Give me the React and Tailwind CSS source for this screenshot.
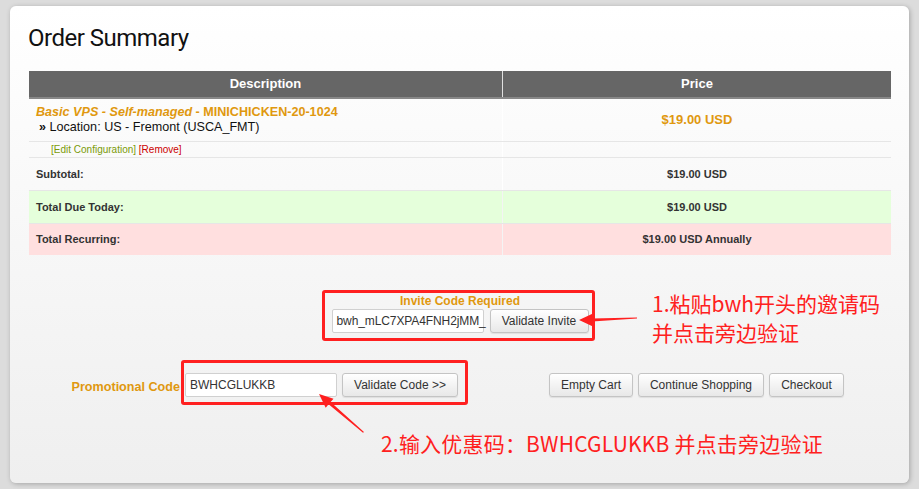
import React from "react";

const btn =
  "h-[24px] rounded-[3px] border border-[#c4c4c4] bg-gradient-to-b from-white to-[#e8e8e8] text-[12px] text-[#333] shadow-[0_1px_1px_rgba(0,0,0,0.08)] flex items-center justify-center";
const input =
  "h-[24px] w-[152px] rounded-[2px] border border-[#d0d0d0] bg-white text-[12px] text-[#333] pl-[4px] flex items-center whitespace-nowrap";

export default function App() {
  return (
    <div
      className="relative w-[919px] h-[489px] bg-[#dcdcdc] pt-[6px] pl-[10px] overflow-hidden"
      style={{ fontFamily: '"Liberation Sans", Arial, sans-serif' }}
    >
      <div className="w-[899px] h-[477px] rounded-[6px] bg-gradient-to-b from-white to-[#efefef] shadow-[1px_1px_5px_rgba(0,0,0,0.25)] pt-[17px] pl-[18px] pr-[19px]">
        <h1
          className="text-[24px] leading-[31px] text-[#111] tracking-[-0.5px]"
          style={{ fontFamily: 'Roboto, "Noto Sans", sans-serif' }}
        >
          Order Summary
        </h1>

        <div className="mt-[17px] ml-[1px] w-[862px]">
          {/* header */}
          <div className="flex h-[28px] bg-[#666] border-b-2 border-[#888] text-white font-bold text-[13px]">
            <div className="w-[473px] flex items-center justify-center">Description</div>
            <div className="flex-1 border-l border-[#e0e0e0] flex items-center justify-center">Price</div>
          </div>
          {/* product */}
          <div className="flex h-[42px]">
            <div className="w-[473px] pl-[7px] pt-[6px] text-[12.6px] leading-[15px]">
              <div className="text-[#e0980f] font-bold">
                <span className="italic">Basic VPS - Self-managed</span> - MINICHICKEN-20-1024
              </div>
              <div className="text-[#111] pl-[3px]">
                <b>»</b> Location: US - Fremont (USCA_FMT)
              </div>
            </div>
            <div className="flex-1 border-l border-white flex items-center justify-center text-[13px] font-bold text-[#e0980f]">
              $19.00 USD
            </div>
          </div>
          {/* edit row */}
          <div className="flex h-[16px] border-t border-[#e6e6e6]">
            <div className="w-[473px] pl-[22px] text-[10px] leading-[14px] pt-[1px]">
              <span className="text-[#7a9a08]">[Edit Configuration]</span>{" "}
              <span className="text-[#cc0000]">[Remove]</span>
            </div>
            <div className="flex-1 border-l border-white"></div>
          </div>
          {/* subtotal */}
          <div className="flex h-[33px] border-t border-[#e6e6e6] text-[11px] font-bold text-[#333]">
            <div className="w-[473px] pl-[7px] flex items-center">Subtotal:</div>
            <div className="flex-1 border-l border-white flex items-center justify-center">$19.00 USD</div>
          </div>
          <div className="flex h-[33px] border-t border-[#e6e6e6] bg-[#e5ffdb] text-[11px] font-bold text-[#333]">
            <div className="w-[473px] pl-[7px] flex items-center">Total Due Today:</div>
            <div className="flex-1 border-l border-[#f4f4f4] flex items-center justify-center">$19.00 USD</div>
          </div>
          <div className="flex h-[32px] border-t border-[#e6e6e6] bg-[#ffdfdf] text-[11px] font-bold text-[#333]">
            <div className="w-[473px] pl-[7px] flex items-center">Total Recurring:</div>
            <div className="flex-1 border-l border-[#f4f4f4] flex items-center justify-center">$19.00 USD Annually</div>
          </div>
        </div>

        {/* invite */}
        <div className="mt-[39px] ml-[1px] w-[862px] flex flex-col items-center">
          <div className="text-[12px] leading-[15px] font-bold text-[#e0980f]">Invite Code Required</div>
          <div className="flex gap-[6px]">
            <div className={input + " text-[11.5px] tracking-[-0.1px]"}>bwh_mLC7XPA4FNH2jMM_</div>
            <div className={btn + " w-[99px]"}>Validate Invite</div>
          </div>
        </div>

        {/* promo + buttons */}
        <div className="mt-[40px] ml-[1px] flex items-center">
          <div className="w-[151px] text-right text-[12.6px] font-bold text-[#e0980f] pt-[5px]">Promotional Code</div>
          <div className={input + " ml-[5px]"}>BWHCGLUKKB</div>
          <div className={btn + " w-[116px] ml-[5px]"}>Validate Code &gt;&gt;</div>
          <div className={btn + " w-[84px] ml-[91px]"}>Empty Cart</div>
          <div className={btn + " w-[126px] ml-[5px]"}>Continue Shopping</div>
          <div className={btn + " w-[75px] ml-[5px]"}>Checkout</div>
        </div>
      </div>

      {/* annotations overlay */}
      <div className="absolute left-[322px] top-[290px] w-[273px] h-[51px] border-[3px] border-[#ff2020] rounded-[3px]"></div>
      <div className="absolute left-[181px] top-[360px] w-[287px] h-[45px] border-[3px] border-[#ff2020] rounded-[3px]"></div>
      <div
        className="absolute left-[652px] top-[289px] text-[21px] leading-[29px] text-[#ff2020]"
        style={{ fontFamily: '"Noto Sans CJK SC", sans-serif' }}
      >
        <div>1.粘贴bwh开头的邀请码</div>
        <div>并点击旁边验证</div>
      </div>
      <div
        className="absolute left-[381px] top-[429px] text-[21px] leading-[29px] text-[#ff2020] whitespace-nowrap tracking-[0.2px]"
        style={{ fontFamily: '"Noto Sans CJK SC", sans-serif' }}
      >
        2.输入优惠码：BWHCGLUKKB 并点击旁边验证
      </div>
      <svg className="absolute left-0 top-0" width="919" height="489" viewBox="0 0 919 489">
        <polygon
          points="579,320 594,313 592,318.5 637,317.5 637,318.5 592,321.5 594,327"
          fill="#ff2020"
        />
        <polygon
          points="319,394 333.5,398.7 330.6,402.1 364,432 363,432.8 328.6,404.3 325.7,407.7"
          fill="#ff2020"
        />
      </svg>
    </div>
  );
}
